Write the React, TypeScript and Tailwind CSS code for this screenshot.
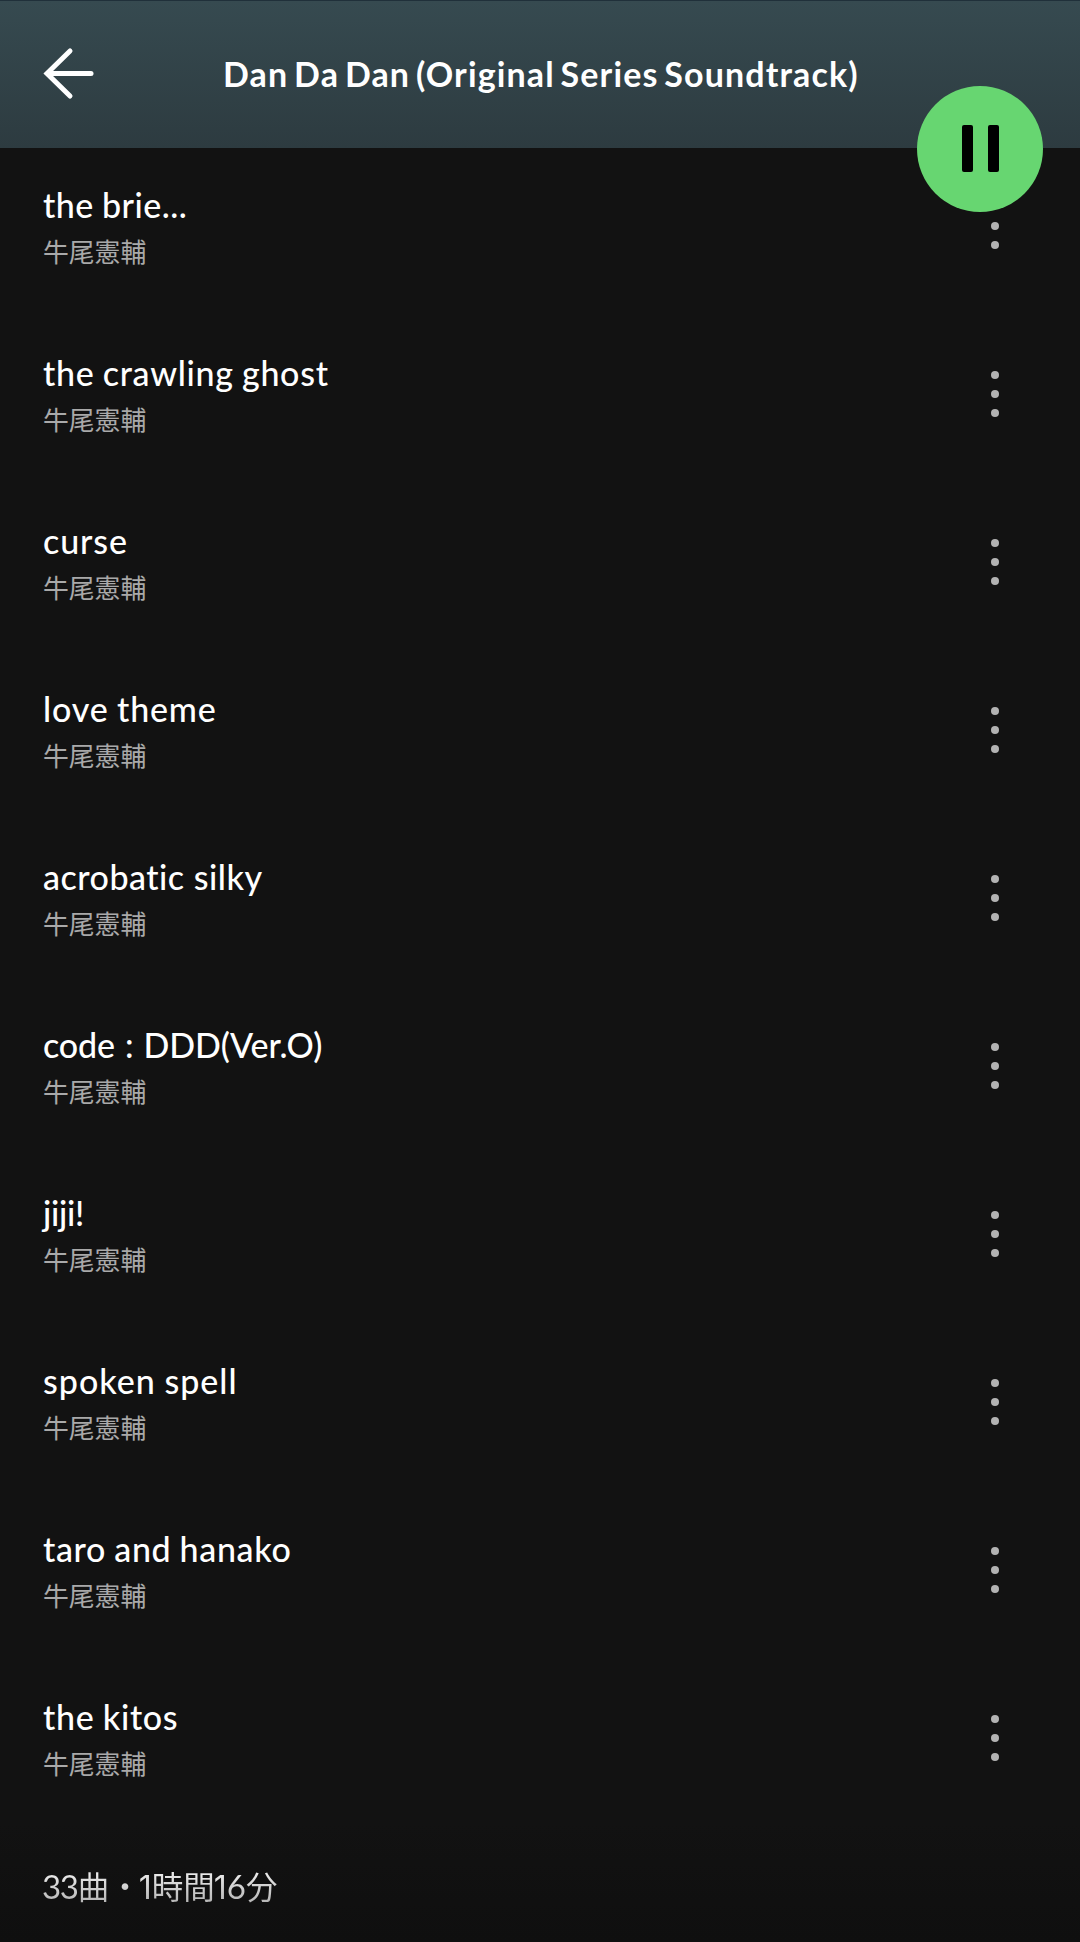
const tracks = [
  { title: "the brie...", spacing: "tracking-[0.5px] [word-spacing:-1px]" },
  { title: "the crawling ghost", spacing: "tracking-[0.7px] [word-spacing:-1px]" },
  { title: "curse", spacing: "tracking-[0.9px]" },
  { title: "love theme", spacing: "tracking-[0.85px] [word-spacing:-1px]" },
  { title: "acrobatic silky", spacing: "tracking-[0.5px]" },
  { title: "code : DDD(Ver.O)", spacing: "tracking-[-0.1px] [word-spacing:1.5px]" },
  { title: "jiji!", spacing: "tracking-[-0.3px]" },
  { title: "spoken spell", spacing: "tracking-[1px] [word-spacing:-1px]" },
  { title: "taro and hanako", spacing: "tracking-[0.65px] [word-spacing:-1px]" },
  { title: "the kitos", spacing: "tracking-[0.7px] [word-spacing:-1px]" },
];

function BackArrow() {
  return (
    <svg className="mb-1 h-14 w-14" viewBox="0 0 56 56" fill="none" stroke="#fff" strokeWidth="5" strokeLinecap="round" strokeLinejoin="miter">
      <path d="M30 6 7 28.5 30 51" />
      <path d="M8 28.5h43" />
    </svg>
  );
}

function MoreButton() {
  return (
    <button aria-label="more" className="flex w-8 flex-col items-center gap-[11.4px]">
      <span className="size-2 rounded-full bg-[#b3b3b3] group-first:invisible" />
      <span className="size-2 rounded-full bg-[#b3b3b3]" />
      <span className="size-2 rounded-full bg-[#b3b3b3]" />
    </button>
  );
}

function TrackRow({ title, spacing }: { title: string; spacing: string }) {
  return (
    <li className="group flex h-[168px] items-center justify-between pr-[69px] pl-[43px]">
      <div className="h-[82px]">
        <div className={`text-[34px] leading-10 font-medium whitespace-nowrap text-white ${spacing}`}>{title}</div>
        <div className="mt-2 font-['Noto_Sans_CJK_JP',sans-serif] text-[25.8px] leading-9 text-[#a9a9a9]">牛尾憲輔</div>
      </div>
      <MoreButton />
    </li>
  );
}

export default function App() {
  return (
    <div className="flex h-[1942px] w-[1080px] flex-col overflow-hidden bg-[#121212] font-['Lato','Noto_Sans_CJK_JP',sans-serif]">
      <header className="relative z-10 flex h-[148px] shrink-0 items-center border-t border-[#20303a] bg-linear-to-b from-[#364a50] to-[#2d3b40] pl-10">
        <BackArrow />
        <h1 className="mb-[3px] ml-[127px] text-[34px] font-bold tracking-[1.12px] whitespace-nowrap text-white [word-spacing:-3.5px]">
          Dan Da Dan (Original Series Soundtrack)
        </h1>
        <button
          aria-label="pause"
          className="absolute top-[85px] left-[917px] flex size-[126px] items-center justify-center gap-[15px] rounded-full bg-[#67d671] pb-px"
        >
          <span className="h-[47px] w-[11px] rounded-xs bg-black" />
          <span className="h-[47px] w-[11px] rounded-xs bg-black" />
        </button>
      </header>
      <ul className="-mt-1.5 shrink-0">
        {tracks.map((t) => (
          <TrackRow key={t.title} {...t} />
        ))}
      </ul>
      <footer className="flex flex-1 bg-linear-to-b from-[#121212] to-[#0f0f0f] pt-11 pl-[42px]">
        <span className="h-10 bg-linear-to-b from-[#f8f8f8] to-[#b0b0b0] bg-clip-text text-[31.5px] leading-10 whitespace-nowrap text-transparent">
          <span className="text-[33px] tracking-[-1.3px]">33</span>
          曲・
          <span className="-ml-0.5 font-['Inter'] text-[32px]">1</span>
          時間
          <span className="-ml-px font-['Inter'] text-[32px]">1</span>
          <span className="text-[33px]">6</span>
          分
        </span>
      </footer>
    </div>
  );
}
